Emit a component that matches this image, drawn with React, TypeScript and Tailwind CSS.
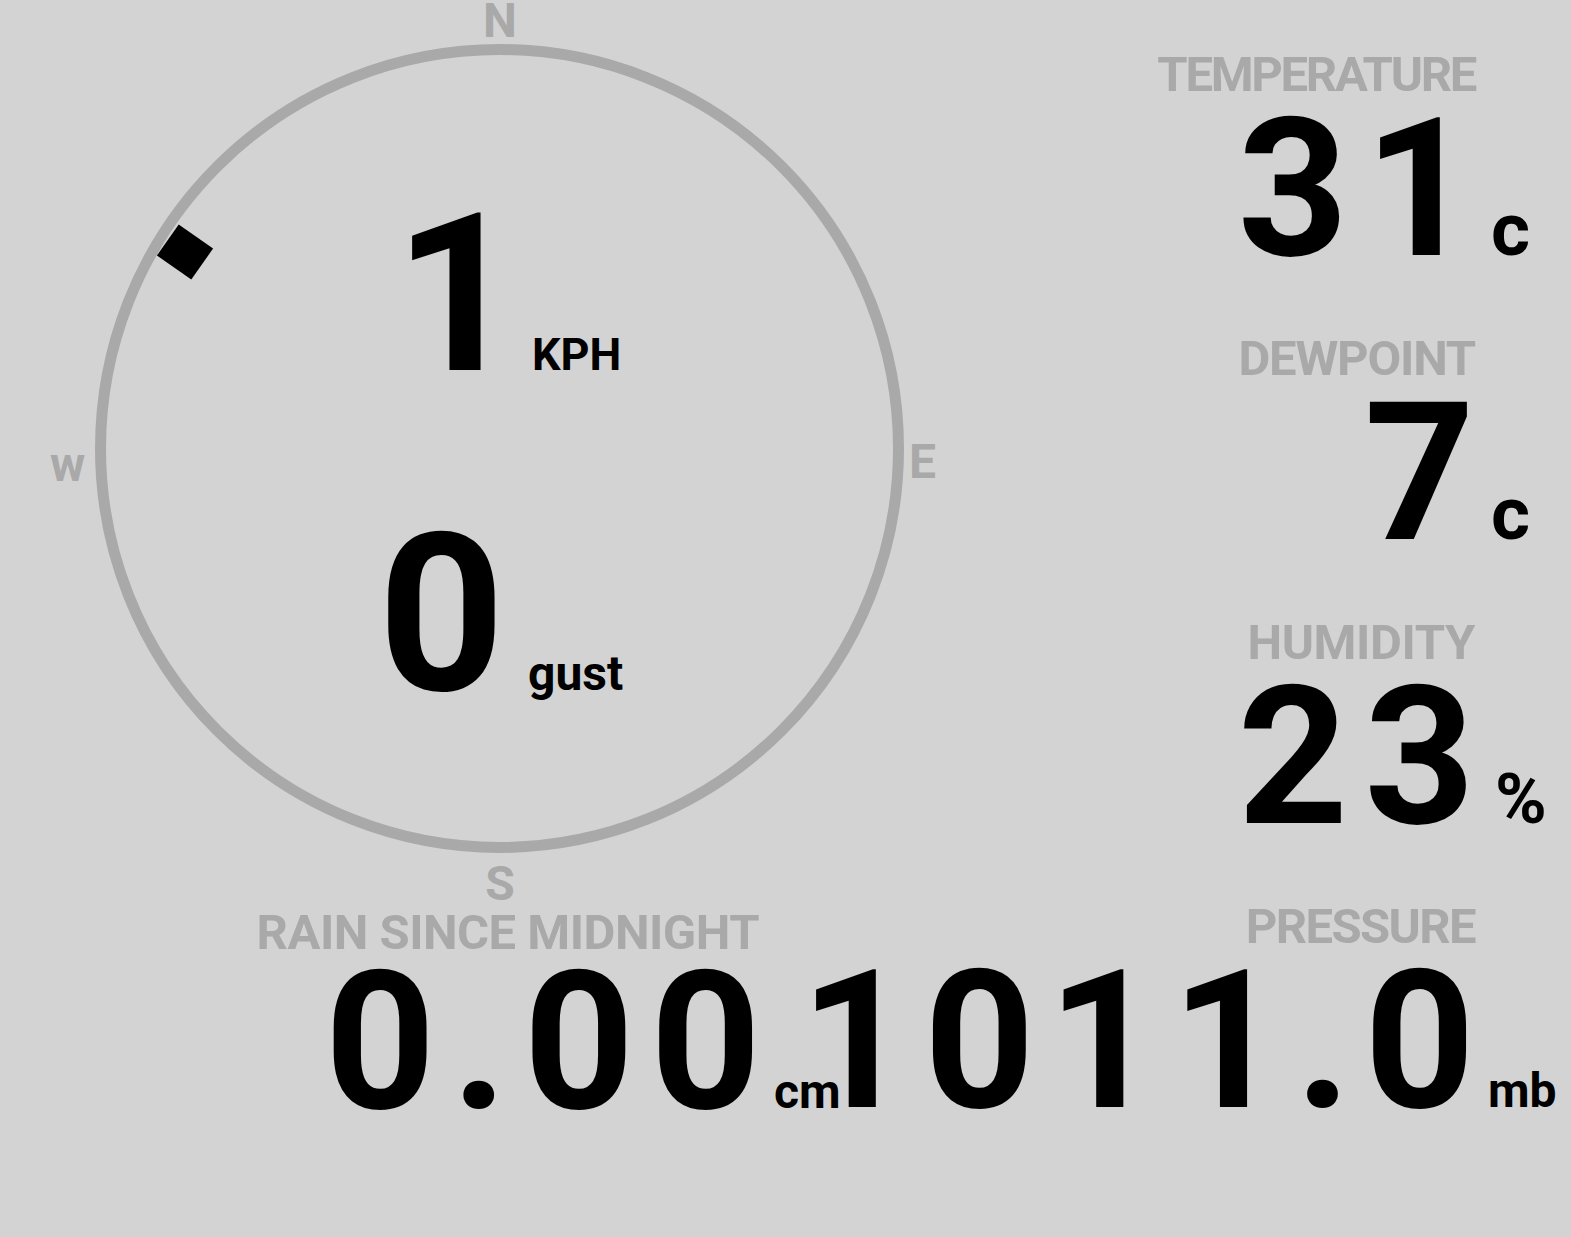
import React from "react";

interface MetricProps {
  label: string;
  value: string;
  unit: string;
  labelClass?: string;
  valueClass?: string;
  unitClass?: string;
  rowClass?: string;
}

function Metric({
  label,
  value,
  unit,
  labelClass = "pr-[96px]",
  valueClass = "-mr-[16px] tracking-[16px]",
  unitClass = "w-[96px] pl-[16px] text-[75px]",
  rowClass = "",
}: MetricProps) {
  return (
    <div className="flex flex-col">
      <div className={`h-[48px] whitespace-nowrap text-right text-[49px] font-bold leading-[48px] text-[#a9a9a9] ${labelClass}`}>
        {label}
      </div>
      <div className={`flex items-baseline justify-end ${rowClass}`}>
        <span className={`whitespace-nowrap text-[193px] font-bold leading-[180px] text-black ${valueClass}`}>{value}</span>
        <span className={`shrink-0 font-bold leading-none text-black ${unitClass}`}>{unit}</span>
      </div>
    </div>
  );
}

function Compass() {
  return (
    <div className="relative h-[909px] w-[860px] shrink-0">
      <svg className="absolute left-0 top-0" width="1000" height="909" viewBox="0 0 1000 909">
        <circle cx="499.5" cy="448.5" r="399" fill="none" stroke="#a9a9a9" strokeWidth="11" />
        <rect x="-21" y="-19" width="42" height="38" fill="#000" transform="translate(185 252) rotate(35)" />
      </svg>

      <span className="absolute left-[500px] top-[3px] -translate-x-1/2 text-[48px] font-bold leading-[36px] text-[#a9a9a9]">N</span>
      <span className="absolute left-[50px] top-[447px] text-[48px] font-bold leading-[36px] text-[#a9a9a9]">w</span>
      <span className="absolute left-[909px] top-[444px] text-[48px] font-bold leading-[36px] text-[#a9a9a9]">E</span>
      <span className="absolute left-[500px] top-[866px] -translate-x-1/2 text-[48px] font-bold leading-[36px] text-[#a9a9a9]">S</span>

      <div className="relative flex w-[1000px] flex-col pl-[378px] pt-[184px]">
        <div className="flex items-baseline">
          <span className="w-[124px] pl-[16px] text-center text-[221px] font-bold leading-[221px] text-black">1</span>
          <span className="ml-[30px] text-[45px] font-bold leading-none text-black">KPH</span>
        </div>
        <div className="mt-[99px] flex items-baseline">
          <span className="w-[124px] text-center text-[221px] font-bold leading-[221px] text-black">0</span>
          <span className="ml-[26px] text-[48px] font-bold leading-none text-black">gust</span>
        </div>
      </div>
    </div>
  );
}

export default function App() {
  return (
    <div className="flex h-[1237px] w-[1571px] overflow-hidden bg-[#d3d3d3] font-['Roboto',sans-serif]">
      <div className="flex w-[860px] shrink-0 flex-col">
        <Compass />
        <Metric
          label="RAIN SINCE MIDNIGHT"
          value="0.00"
          unit="cm"
          labelClass="pr-[101px] tracking-[-0.5px]"
          unitClass="w-[99px] pl-[13px] text-[48px]"
          rowClass="-mt-[5px]"
        />
      </div>
      <div className="flex w-[711px] min-w-0 shrink-0 flex-col gap-[56px] pt-[51px]">
        <Metric label="TEMPERATURE" value="31" unit="c" labelClass="pr-[96px] tracking-[-2.3px]" />
        <Metric label="DEWPOINT" value="7" unit="c" labelClass="pr-[96px] tracking-[-1.2px]" />
        <Metric
          label="HUMIDITY"
          value="23"
          unit="%"
          labelClass="pr-[96px] tracking-[-0.4px]"
          unitClass="w-[96px] pl-[20px] text-[70px]"
        />
        <Metric
          label="PRESSURE"
          value="1011.0"
          unit="mb"
          labelClass="pr-[96px] tracking-[-1.6px]"
          valueClass="-mr-[13px] tracking-[13px]"
          unitClass="w-[96px] pl-[13px] text-[48px]"
        />
      </div>
    </div>
  );
}
